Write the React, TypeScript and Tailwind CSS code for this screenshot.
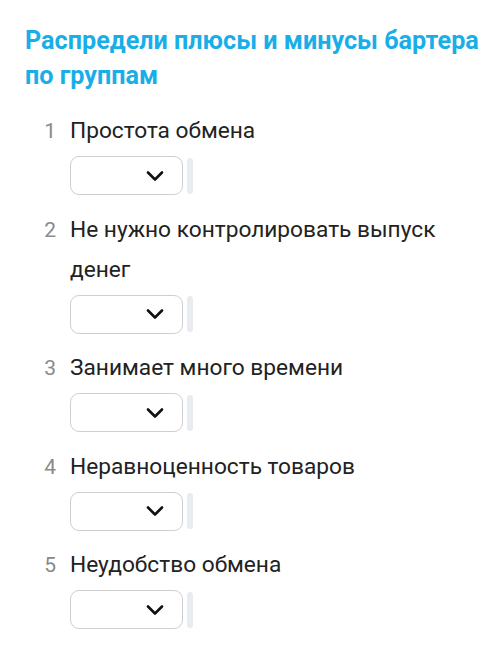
const items = [
  { n: 1, text: "Простота обмена" },
  { n: 2, text: "Не нужно контролировать выпуск денег" },
  { n: 3, text: "Занимает много времени" },
  { n: 4, text: "Неравноценность товаров" },
  { n: 5, text: "Неудобство обмена" },
];

function Chevron() {
  return (
    <svg viewBox="0 0 20 12" className="h-[12px] w-[20px]" fill="none">
      <path d="M3 2.5 L10 9.5 L17 2.5" stroke="#111" strokeWidth="2.6" strokeLinecap="round" strokeLinejoin="round" />
    </svg>
  );
}

export default function App() {
  return (
    <div className="h-[652px] w-[500px] overflow-hidden bg-white font-['Roboto',sans-serif]">
      <div className="pl-[25px] pr-[12px] pt-[23px]">
        <h1 className="text-[25.2px] font-bold leading-[35px] text-[#19aee8]">
          Распредели плюсы и минусы бартера по группам
        </h1>

        <ol className="mt-[18px] flex flex-col gap-[14.5px]">
          {items.map((item) => (
            <li key={item.n} className="flex">
              <span className="w-[31px] shrink-0 text-right text-[21px] leading-[40px] text-[#8a8a8a]">
                {item.n}
              </span>
              <div className="ml-[14px] flex-1">
                <p className="pr-[40px] text-[22.7px] leading-[40px] text-[#222]">{item.text}</p>
                <div className="mt-[5px] flex items-center">
                  <button className="flex h-[39px] w-[113px] items-center justify-end rounded-[9px] border border-[#cfcfcf] bg-white pr-[17px]">
                    <Chevron />
                  </button>
                  <div className="ml-[4px] h-[36px] w-[6px] rounded-[3px] bg-[#e8ebef]" />
                </div>
              </div>
            </li>
          ))}
        </ol>
      </div>
    </div>
  );
}
